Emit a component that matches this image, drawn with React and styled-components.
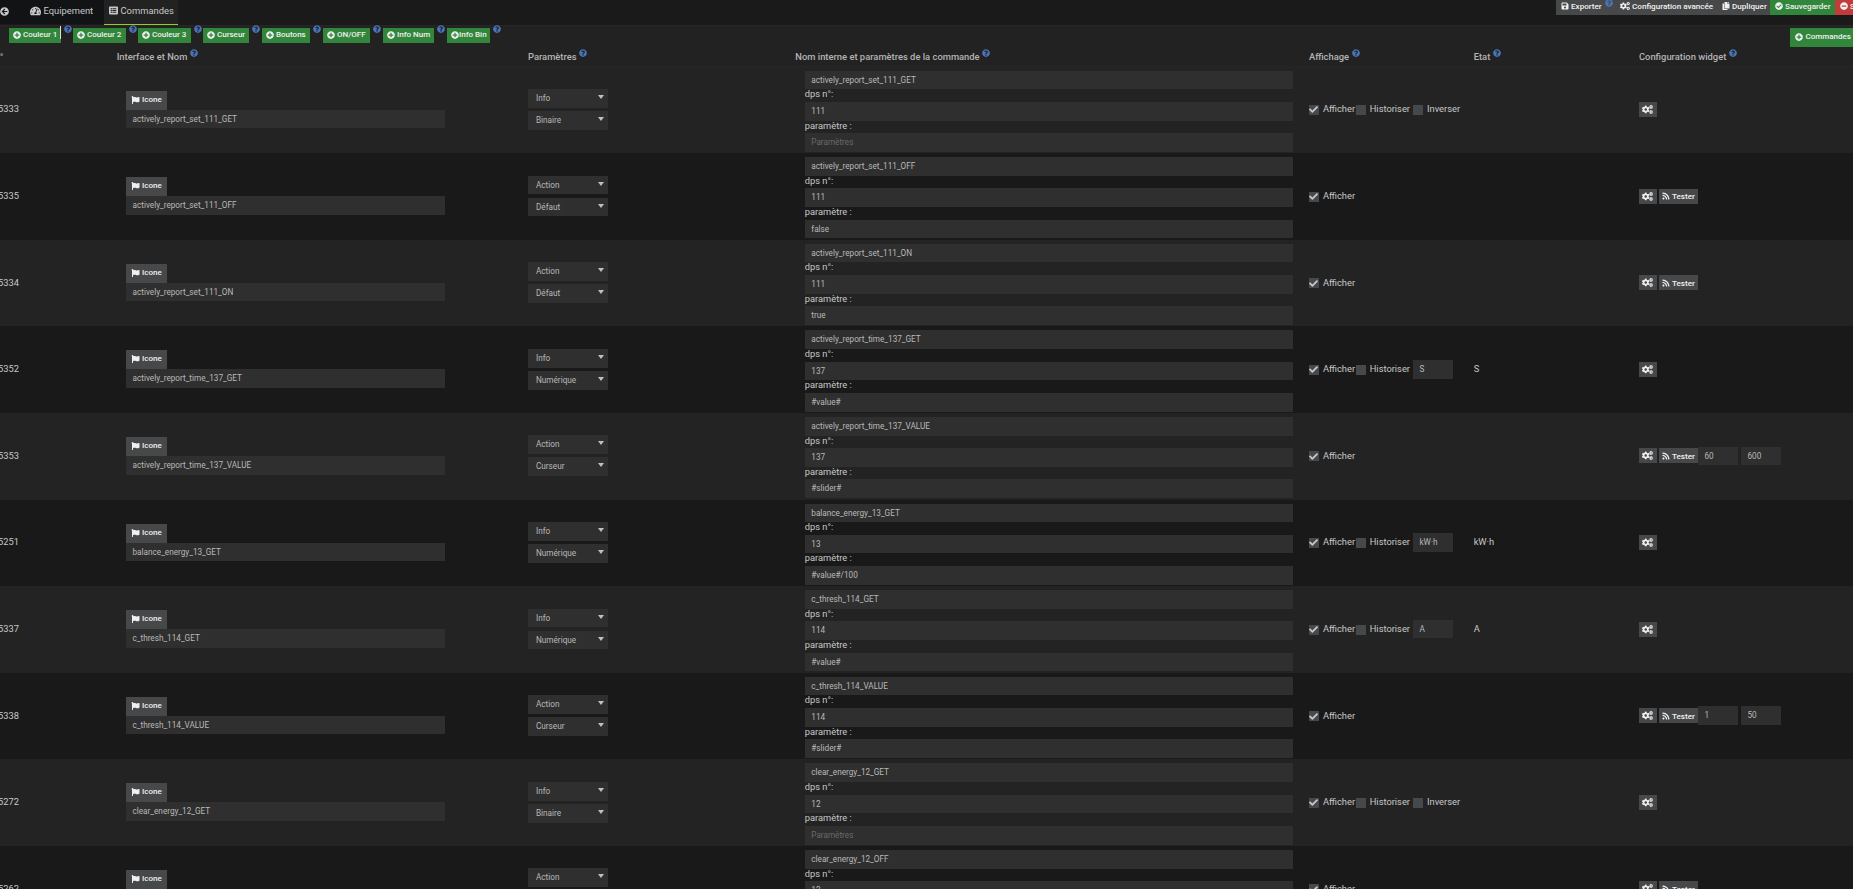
import React from "react"
import styled, { createGlobalStyle } from "styled-components"
import {
  FaArrowCircleLeft,
  FaTachometerAlt,
  FaListAlt,
  FaPlusCircle,
  FaQuestionCircle,
  FaFlag,
  FaCheck,
  FaCheckCircle,
  FaMinusCircle,
  FaCogs,
  FaRss,
  FaSave,
  FaCopy,
} from "react-icons/fa"

const colors = {
  page: "#1a1a1a",
  panel: "#222222",
  odd: "#232323",
  even: "#191919",
  field: "#2f2f2f",
  button: "#474849",
  green: "#32863b",
  red: "#c43b3b",
  blue: "#4a73b8",
  text: "#c8c8c8",
  lime: "#9bcb1e",
}

const addButtons = [
  { label: "Couleur 1", width: 52, gap: 12, caret: true },
  { label: "Couleur 2", width: 53, gap: 12 },
  { label: "Couleur 3", width: 53, gap: 12 },
  { label: "Curseur", width: 46, gap: 13 },
  { label: "Boutons", width: 48, gap: 13 },
  { label: "ON/OFF", width: 47, gap: 13 },
  { label: "Info Num", width: 51, gap: 13 },
  { label: "Info Bin", width: 43, gap: 11, tight: true },
]

const headings = [
  "N°",
  "Interface et Nom",
  "Paramètres",
  "Nom interne et paramètres de la commande",
  "Affichage",
  "Etat",
  "Configuration widget",
]

const commands = [
  { id: 5333, name: "actively_report_set_111_GET", type: "Info", sub: "Binaire", dps: "111", param: "" },
  { id: 5335, name: "actively_report_set_111_OFF", type: "Action", sub: "Défaut", dps: "111", param: "false" },
  { id: 5334, name: "actively_report_set_111_ON", type: "Action", sub: "Défaut", dps: "111", param: "true" },
  { id: 5352, name: "actively_report_time_137_GET", type: "Info", sub: "Numérique", dps: "137", param: "#value#", unit: "S" },
  { id: 5353, name: "actively_report_time_137_VALUE", type: "Action", sub: "Curseur", dps: "137", param: "#slider#", range: ["60", "600"] },
  { id: 5251, name: "balance_energy_13_GET", type: "Info", sub: "Numérique", dps: "13", param: "#value#/100", unit: "kW·h" },
  { id: 5337, name: "c_thresh_114_GET", type: "Info", sub: "Numérique", dps: "114", param: "#value#", unit: "A" },
  { id: 5338, name: "c_thresh_114_VALUE", type: "Action", sub: "Curseur", dps: "114", param: "#slider#", range: ["1", "50"] },
  { id: 5272, name: "clear_energy_12_GET", type: "Info", sub: "Binaire", dps: "12", param: "" },
  { id: 5262, name: "clear_energy_12_OFF", type: "Action", sub: "Défaut", dps: "12", param: "false" },
]

function Help({ top }) {
  return (
    <HelpMark $top={top}>
      <FaQuestionCircle />
    </HelpMark>
  )
}

function Check({ checked, children, gap }) {
  return (
    <CheckLabel $gap={gap}>
      <Box>{checked && <FaCheck />}</Box>
      {children}
    </CheckLabel>
  )
}

function Command({ cmd }) {
  const isInfo = cmd.type === "Info"
  return (
    <Row>
      <Id>{cmd.id}</Id>
      <NameCell>
        <IconButton>
          <FaFlag /> Icone
        </IconButton>
        <Field>{cmd.name}</Field>
      </NameCell>
      <TypeCell>
        <Select>{cmd.type}</Select>
        <Select>{cmd.sub}</Select>
      </TypeCell>
      <ParamCell>
        <Field>{cmd.name}</Field>
        <Label>dps n°:</Label>
        <Field>{cmd.dps}</Field>
        <Label>paramètre :</Label>
        <Field $empty={!cmd.param}>{cmd.param || "Paramètres"}</Field>
      </ParamCell>
      <ShowCell>
        <Check checked gap={0.7}>Afficher</Check>
        {isInfo && <Check gap={3}>Historiser</Check>}
        {cmd.sub === "Binaire" && <Check>Inverser</Check>}
        {cmd.unit && <SmallField>{cmd.unit}</SmallField>}
      </ShowCell>
      <State>{cmd.unit}</State>
      <WidgetCell>
        <GearButton>
          <FaCogs />
        </GearButton>
        {!isInfo && (
          <TestButton>
            <FaRss /> Tester
          </TestButton>
        )}
        {cmd.range && (
          <Range>
            <SmallField>{cmd.range[0]}</SmallField>
            <SmallField>{cmd.range[1]}</SmallField>
          </Range>
        )}
      </WidgetCell>
    </Row>
  )
}

export default function App() {
  return (
    <Page>
      <GlobalStyle />
      <TopBar>
        <Tabs>
          <Tab $width={19} $pad={0}>
            <FaArrowCircleLeft />
          </Tab>
          <Tab $width={85} $pad={11}>
            <FaTachometerAlt className="wide" /> Equipement
          </Tab>
          <Tab $width={74} $pad={5} $active>
            <FaListAlt /> Commandes
          </Tab>
        </Tabs>
        <Actions>
          <Action $width={59}>
            <FaSave /> Exporter
            <Help top={-1} />
          </Action>
          <Action $width={102}>
            <FaCogs className="wide" /> Configuration avancée
          </Action>
          <Action $width={53}>
            <FaCopy /> Dupliquer
          </Action>
          <Action $width={65} $bg={colors.green}>
            <FaCheckCircle /> Sauvegarder
          </Action>
          <Action $width={18} $bg={colors.red}>
            <FaMinusCircle /> Supprimer
          </Action>
        </Actions>
      </TopBar>
      <Panel>
        <AddBar>
          {addButtons.map(({ label, width, gap, caret, tight }) => (
            <AddItem key={label} $gap={gap}>
              <AddButton $width={width} $tight={tight}>
                <FaPlusCircle />
                {label}
              </AddButton>
              {caret && <Caret />}
              <Help top={-3} />
            </AddItem>
          ))}
          <CommandsButton>
            <FaPlusCircle />
            Commandes
          </CommandsButton>
        </AddBar>
        <HeadRow>
          {headings.map((h, i) => (
            <Heading key={h} $first={i === 0}>
              {h}
              {i > 0 && <Help top={-2} />}
            </Heading>
          ))}
        </HeadRow>
        {commands.map(cmd => (
          <Command key={cmd.id} cmd={cmd} />
        ))}
      </Panel>
    </Page>
  )
}

const GlobalStyle = createGlobalStyle`
  body {
    margin: 0;
    overflow: hidden;
    background: ${colors.page};
  }
  * {
    box-sizing: border-box;
  }
`
const Page = styled.div`
  width: 1853px;
  height: 889px;
  overflow: hidden;
  background: ${colors.page};
  color: ${colors.text};
  font-family: Roboto, "Liberation Sans", sans-serif;
  font-size: 9.3px;
  line-height: 12px;
  white-space: nowrap;
`
const TopBar = styled.header`
  display: flex;
  justify-content: space-between;
  align-items: flex-start;
  height: 25px;
`
const Tabs = styled.nav`
  display: flex;
`
const Tab = styled.div`
  display: flex;
  align-items: center;
  gap: 2.5px;
  width: ${p => p.$width}px;
  height: ${p => (p.$active ? 25 : 24)}px;
  padding: 0 0 ${p => (p.$active ? 3 : 2)}px ${p => p.$pad}px;
  background: ${p => (p.$active ? colors.panel : "#121314")};
  border-bottom: ${p => (p.$active ? `1px solid ${colors.lime}` : "none")};
  font-size: 9.4px;
  svg {
    flex: none;
    width: 9px;
    height: 9px;
  }
  .wide {
    width: 11px;
    height: 10px;
  }
`
const Actions = styled.div`
  display: flex;
`
const Action = styled.div`
  display: flex;
  align-items: center;
  gap: 2px;
  width: ${p => p.$width}px;
  height: 15px;
  padding: 0 0 3px 5px;
  overflow: hidden;
  background: ${p => p.$bg || colors.button};
  color: #f0f0f0;
  font-size: 8.1px;
  font-weight: 500;
  svg {
    flex: none;
    width: 8px;
    height: 8px;
  }
  .wide {
    width: 10px;
  }
  sup {
    margin-left: 1px;
  }
`
const Panel = styled.main`
  background: ${colors.panel};
  border-top: 1px solid #272727;
`
const HelpMark = styled.sup`
  display: flex;
  align-self: flex-start;
  flex: none;
  margin: ${p => p.$top}px 0 0 2.5px;
  color: ${colors.blue};
  svg {
    width: 8px;
    height: 8px;
  }
`
const AddBar = styled.div`
  display: flex;
  align-items: flex-start;
  height: 19px;
  margin-top: 2px;
  padding-left: 9px;
`
const AddItem = styled.div`
  display: flex;
  margin-right: ${p => p.$gap - 10.5}px;
`
const AddButton = styled.div`
  display: flex;
  align-items: center;
  gap: ${p => (p.$tight ? 0 : 2)}px;
  width: ${p => p.$width}px;
  height: 15px;
  padding: 0 0 1px 4px;
  background: ${colors.green};
  color: #f0f0f0;
  font-size: 8px;
  font-weight: 500;
  svg {
    flex: none;
    width: 8px;
    height: 8px;
  }
`
const Caret = styled.i`
  width: 1px;
  height: 13px;
  margin: -2px 0 0 -1px;
  background: #ddd;
`
const CommandsButton = styled(AddButton)`
  gap: 2.5px;
  width: 63px;
  height: 19px;
  margin-left: auto;
  padding-left: 5px;
`
const columns = "116.7px 411.3px 267.3px 513.7px 164.7px 165.3px 1fr"
const HeadRow = styled.div`
  display: grid;
  grid-template-columns: ${columns};
  height: 19.7px;
  border-bottom: 1px solid #262626;
`
const Heading = styled.div`
  display: flex;
  padding-top: 4px;
  margin-left: ${p => (p.$first ? -7 : 0)}px;
  font-size: 9.4px;
  font-weight: 500;
  color: #b4b4b4;
`
const Row = styled.div`
  display: grid;
  grid-template-columns: ${columns};
  height: 86.6px;
  background: ${colors.even};
  &:nth-of-type(odd) {
    background: ${colors.odd};
  }
`
const Id = styled.div`
  align-self: center;
  margin: 0 0 1px -2px;
`
const Field = styled.div`
  height: 18.7px;
  padding-left: 6.5px;
  background: ${colors.field};
  color: ${p => (p.$empty ? "#6a6a6a" : "#b9b9b9")};
  font-size: 8.2px;
  line-height: 18px;
`
const NameCell = styled.div`
  width: 328.3px;
  padding: 24px 0 0 9.3px;
`
const IconButton = styled.div`
  display: flex;
  align-items: center;
  gap: 2px;
  width: 41px;
  height: 18.9px;
  padding: 0 0 1px 5px;
  background: ${colors.button};
  color: #f0f0f0;
  font-size: 8px;
  font-weight: 500;
  svg {
    width: 9px;
    height: 8px;
  }
`
const TypeCell = styled.div`
  display: flex;
  flex-direction: column;
  gap: 3.3px;
  padding-top: 22.4px;
`
const Select = styled.div`
  display: flex;
  justify-content: space-between;
  width: 80px;
  height: 18.7px;
  padding: 0 4px 0 8px;
  background: ${colors.field};
  color: #b9b9b9;
  font-size: 8.2px;
  line-height: 19px;
  &::after {
    content: "";
    margin-top: 6px;
    height: 0;
    border: 3.5px solid transparent;
    border-top: 4px solid #c0c0c0;
    border-bottom: 0;
  }
`
const ParamCell = styled.div`
  width: 497.5px;
  padding: 3.85px 0 0 9.5px;
`
const Label = styled.div`
  height: 12.6px;
  line-height: 10px;
`
const ShowCell = styled.div`
  display: flex;
  align-items: center;
  padding-bottom: 1px;
`
const CheckLabel = styled.div`
  display: flex;
  align-items: center;
  gap: 4px;
  margin-right: ${p => p.$gap || 0}px;
`
const Box = styled.span`
  display: flex;
  align-items: center;
  justify-content: center;
  width: 10px;
  height: 10px;
  margin-top: 1px;
  background: ${colors.button};
  svg {
    width: 9px;
    height: 9px;
  }
`
const SmallField = styled(Field)`
  width: 40px;
`
const State = styled.div`
  align-self: center;
  margin-bottom: 1px;
`
const WidgetCell = styled.div`
  display: flex;
  align-items: center;
  padding-bottom: 1px;
`
const GearButton = styled.div`
  display: flex;
  align-items: center;
  justify-content: center;
  width: 18px;
  height: 15px;
  margin-right: 2px;
  background: ${colors.button};
  color: #f0f0f0;
  svg {
    width: 11px;
    height: 9px;
  }
`
const TestButton = styled.div`
  display: flex;
  align-items: center;
  gap: 2px;
  width: 39px;
  height: 15px;
  padding-left: 3px;
  background: ${colors.button};
  color: #f0f0f0;
  font-size: 8.1px;
  font-weight: 500;
  svg {
    width: 8px;
    height: 8px;
  }
`
const Range = styled.div`
  display: flex;
  gap: 3px;
`
